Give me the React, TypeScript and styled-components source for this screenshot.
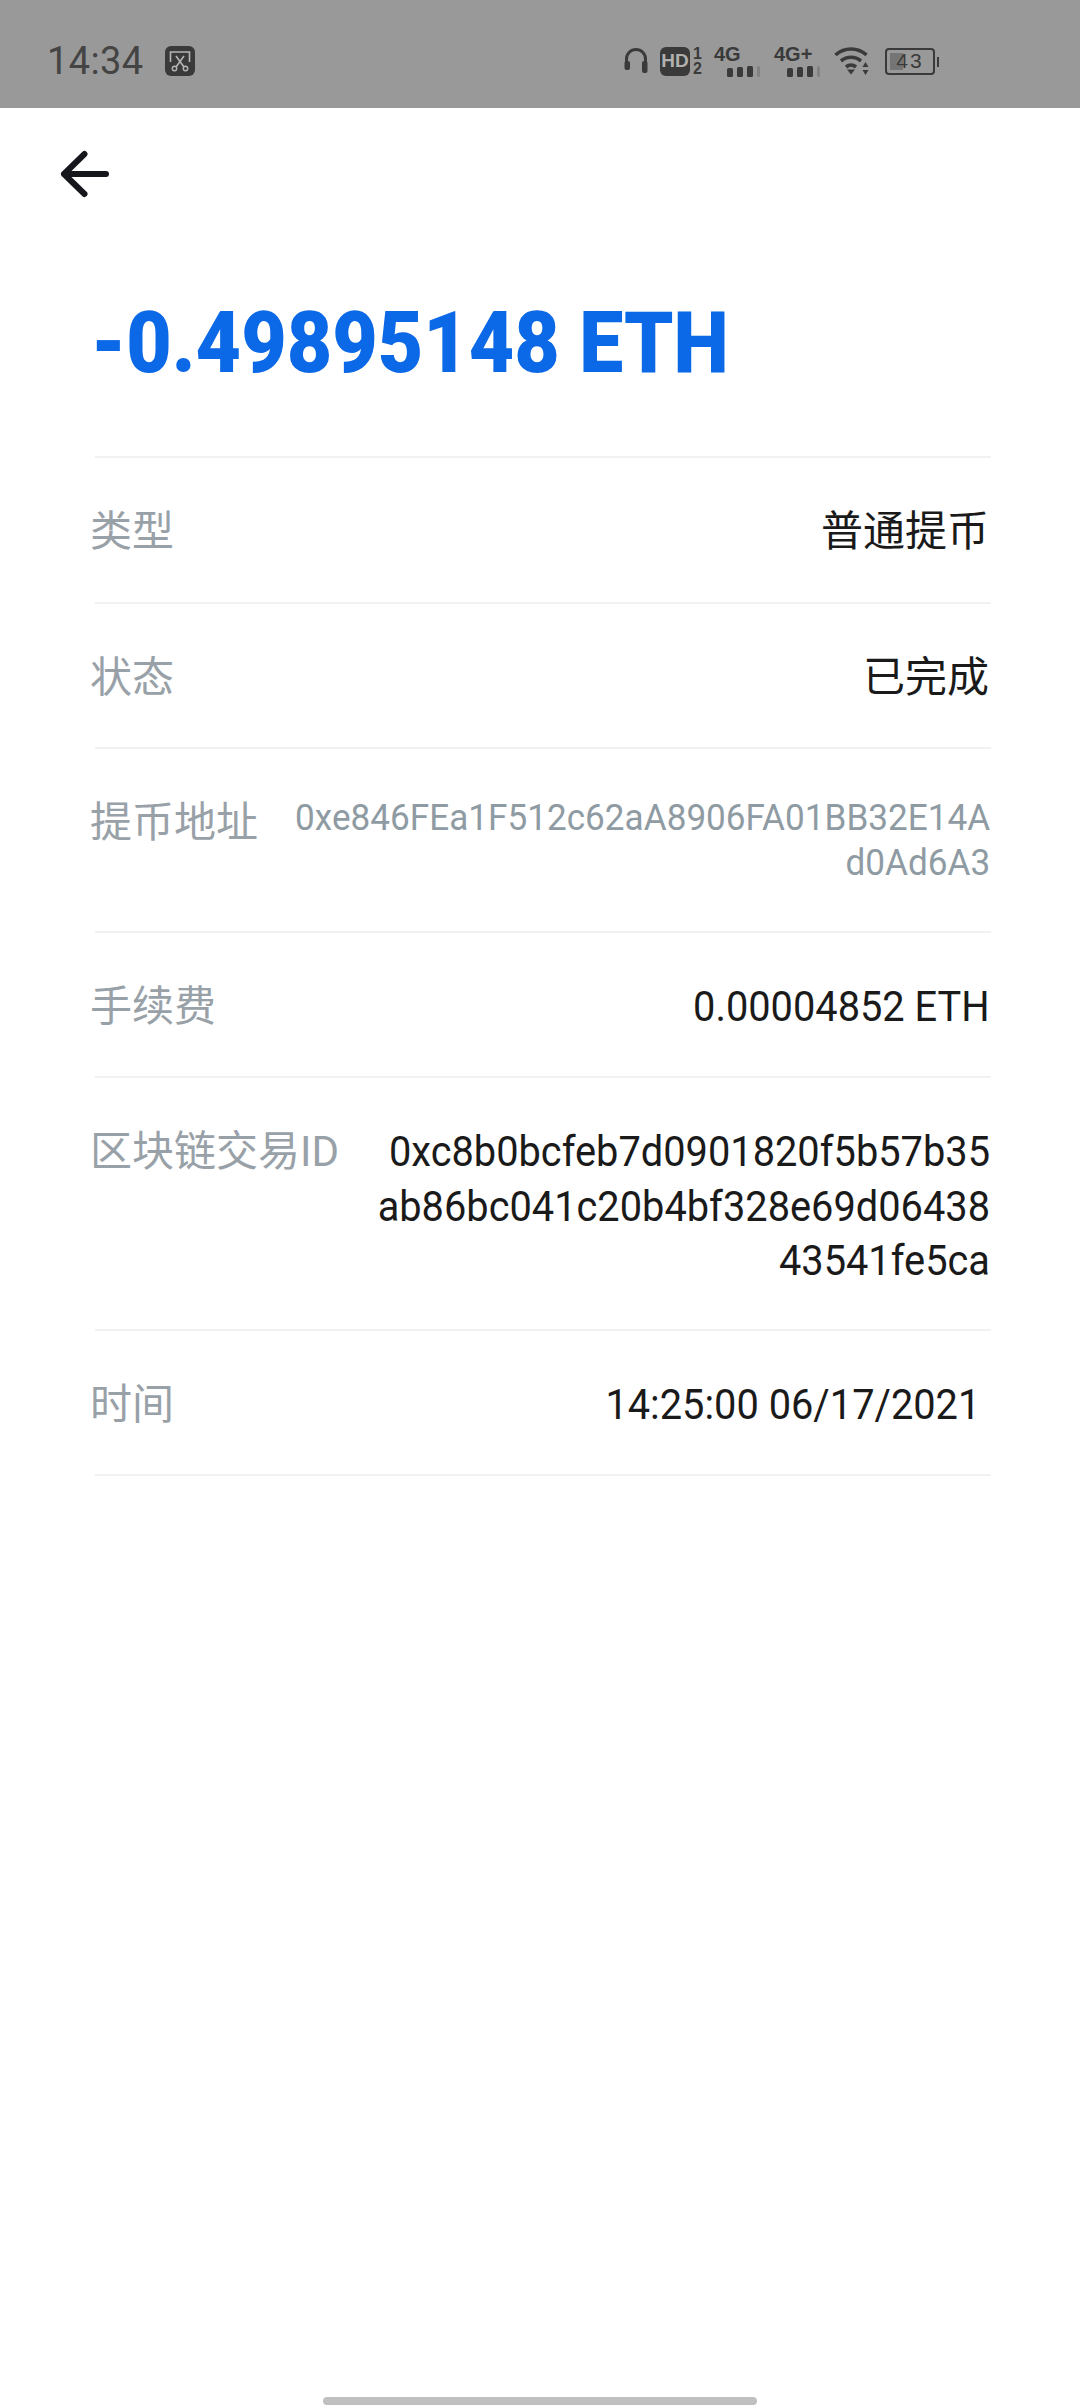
import React from "react";
import styled, { createGlobalStyle } from "styled-components";

const Global = createGlobalStyle`
  html, body { margin: 0; padding: 0; background: #fff; }
  * { box-sizing: border-box; }
`;
const CJK = `"Noto Sans CJK SC", sans-serif`;
const INK = "#3a3a3a";

const Page = styled.div`
  width: 1080px;
  height: 2408px;
  display: flex;
  flex-direction: column;
  background: #fff;
  font-family: Roboto, ${CJK};
  overflow: hidden;
`;
const StatusBar = styled.div`
  height: 108px;
  flex: none;
  background: #999999;
  display: flex;
  align-items: center;
  padding: 14px 145px 0 47px;
`;
const Clock = styled.span`
  font-family: Roboto, sans-serif;
  font-size: 38px;
  line-height: 44px;
  letter-spacing: 0.4px;
  color: #444;
`;
const ShotIcon = styled.svg`
  width: 32px;
  height: 32px;
  margin-left: 20px;
`;
const StatusIcons = styled.div`
  margin-left: auto;
  display: flex;
  align-items: center;
`;
const Headset = styled.svg`
  width: 24px;
  height: 28px;
`;
const HdBadge = styled.span`
  margin-left: 12px;
  width: 30px;
  height: 29px;
  border-radius: 6px;
  background: ${INK};
  color: #b0b0b0;
  font: 700 19px "Liberation Sans", sans-serif;
  display: flex;
  align-items: center;
  justify-content: center;
`;
const SimDigits = styled.span`
  display: flex;
  flex-direction: column;
  width: 9px;
  margin-left: 3px;
  font: 700 16px/15px "Liberation Sans", sans-serif;
  color: ${INK};
`;
const Net = styled.span<{ $ml: number }>`
  width: 46px;
  margin-left: ${(p) => p.$ml}px;
  height: 30px;
  display: flex;
  flex-direction: column;
  align-items: flex-start;
`;
const NetLabel = styled.span`
  height: 16px;
  font: 700 20px/16px "Liberation Sans", sans-serif;
  color: ${INK};
`;
const Bars = styled.svg`
  width: 33px;
  height: 11px;
  margin: 4px 0 0 13px;
  flex: none;
`;
const Wifi = styled.svg`
  width: 36px;
  height: 28px;
  margin-left: 14px;
`;
const Battery = styled.span`
  position: relative;
  margin-left: 15px;
  width: 50px;
  height: 27px;
  border: 2px solid ${INK};
  border-radius: 4px;
  display: flex;
  align-items: center;
  justify-content: center;
  font: 400 21px "Liberation Sans", sans-serif;
  letter-spacing: 2px;
  color: ${INK};
  &::before {
    content: "";
    position: absolute;
    left: 3px;
    top: 3px;
    bottom: 3px;
    width: 13px;
    background: #757575;
  }
  &::after {
    content: "";
    position: absolute;
    right: -6px;
    top: 7px;
    height: 10px;
    width: 2px;
    background: ${INK};
  }
`;
const BatteryText = styled.span`
  position: relative;
`;
const BackRow = styled.div`
  height: 84px;
  flex: none;
  padding: 42px 0 0 58px;
`;
const BackIcon = styled.svg`
  width: 52px;
  height: 48px;
  display: block;
`;
const Amount = styled.h1`
  margin: 0;
  height: 264px;
  padding: 101px 0 0 91px;
  font-family: Roboto, sans-serif;
  font-weight: 900;
  font-size: 85px;
  line-height: 100px;
  color: #0b68e6;
  white-space: nowrap;
  transform: scaleX(0.924);
  transform-origin: 91px 0;
`;
const List = styled.div`
  margin: 0 89px 0 95px;
  border-top: 2px solid #f0f1f2;
  display: flex;
  flex-direction: column;
`;
const Row = styled.div<{ $h: number }>`
  height: ${(p) => p.$h}px;
  border-bottom: 2px solid #f0f1f2;
  display: flex;
  align-items: flex-start;
  padding-top: 45px;
`;
const Label = styled.span`
  margin-left: -5px;
  width: 0;
  flex: none;
  font-family: ${CJK};
  font-size: 42px;
  font-weight: 400;
  line-height: 50px;
  color: #99a1a8;
  white-space: nowrap;
`;
const LabelLatin = styled.span`
  font-family: Roboto, sans-serif;
`;
const Value = styled.span`
  margin-left: auto;
  padding-right: 2px;
  font-family: ${CJK};
  font-size: 42px;
  line-height: 50px;
  color: #1a1a1a;
  text-align: right;
`;
const Num = styled.span<{ $pr?: number }>`
  display: block;
  flex: none;
  margin: 1px ${(p) => p.$pr ?? 1}px 0 auto;
  font-family: Roboto, sans-serif;
  font-size: 43px;
  line-height: 54.5px;
  color: #1a1a1a;
  text-align: right;
  white-space: pre-line;
  transform: scaleX(0.925);
  transform-origin: right top;
`;
const Address = styled.span`
  display: block;
  flex: none;
  margin: 2px 1px 0 auto;
  font-family: Roboto, sans-serif;
  font-size: 36px;
  line-height: 45px;
  color: #8f9ba3;
  text-align: right;
  white-space: pre-line;
  transform: scaleX(0.976);
  transform-origin: right top;
`;
const HomeBar = styled.div`
  margin: auto auto 3px;
  width: 434px;
  height: 8px;
  border-radius: 4px;
  background: #c0c0c0;
`;

const SignalBars = () => (
  <Bars viewBox="0 0 33 11">
    <rect x="0" y="2" width="6" height="9" rx="1.5" fill={INK} />
    <rect x="10" y="1" width="6" height="10" rx="1.5" fill={INK} />
    <rect x="20" y="0" width="6" height="11" rx="1.5" fill={INK} />
    <rect x="30" y="0" width="3" height="11" rx="1.5" fill="#828282" />
  </Bars>
);

export default function App() {
  return (
    <Page>
      <Global />
      <StatusBar>
        <Clock>14:34</Clock>
        <ShotIcon viewBox="0 0 32 32">
          <rect width="30" height="30" x="1" y="1" rx="6" fill={INK} />
          <path d="M6.5 17V7h19v10" fill="none" stroke="#b5b5b5" strokeWidth="1.6" />
          <path d="M12 11l8 11M20 11l-8 11" stroke="#b5b5b5" strokeWidth="1.6" />
          <circle cx="10.5" cy="23.5" r="2.2" fill="none" stroke="#b5b5b5" strokeWidth="1.4" />
          <circle cx="21.5" cy="23.5" r="2.2" fill="none" stroke="#b5b5b5" strokeWidth="1.4" />
        </ShotIcon>
        <StatusIcons>
          <Headset viewBox="0 0 24 28">
            <path d="M2.5 17v-5a9.5 9.5 0 0 1 19 0v5" fill="none" stroke={INK} strokeWidth="3" />
            <rect x="0.5" y="14" width="5.5" height="9" rx="2" fill={INK} />
            <rect x="18" y="14" width="5.5" height="12" rx="2" fill={INK} />
          </Headset>
          <HdBadge>HD</HdBadge>
          <SimDigits>
            <span>1</span>
            <span>2</span>
          </SimDigits>
          <Net $ml={12}>
            <NetLabel>4G</NetLabel>
            <SignalBars />
          </Net>
          <Net $ml={14}>
            <NetLabel>4G+</NetLabel>
            <SignalBars />
          </Net>
          <Wifi viewBox="0 0 36 28">
            <path d="M1.5 8c9-8 22-8 31 0M7 14c6-5 14-5 20 0M12 20c3-2.500 7-2.500 10 0" fill="none" stroke={INK} strokeWidth="3.6" />
            <path d="M13 22.500h8l-4 5z" fill={INK} />
            <path d="M31.500 15l3 5h-6zM31.500 28l-3-5h6z" fill={INK} />
          </Wifi>
          <Battery>
            <BatteryText>43</BatteryText>
          </Battery>
        </StatusIcons>
      </StatusBar>
      <BackRow>
        <BackIcon viewBox="0 0 52 48">
          <path d="M6 24h42M26.500 4 6 24l20.500 20" fill="none" stroke="#15171c" strokeWidth="6" strokeLinecap="round" strokeLinejoin="round" />
        </BackIcon>
      </BackRow>
      <Amount>-0.49895148 ETH</Amount>
      <List>
        <Row $h={146}>
          <Label>类型</Label>
          <Value>普通提币</Value>
        </Row>
        <Row $h={145}>
          <Label>状态</Label>
          <Value>已完成</Value>
        </Row>
        <Row $h={184}>
          <Label>提币地址</Label>
          <Address>{"0xe846FEa1F512c62aA8906FA01BB32E14A\nd0Ad6A3"}</Address>
        </Row>
        <Row $h={145}>
          <Label>手续费</Label>
          <Num>0.00004852 ETH</Num>
        </Row>
        <Row $h={253}>
          <Label>
            区块链交易<LabelLatin>ID</LabelLatin>
          </Label>
          <Num>{"0xc8b0bcfeb7d0901820f5b57b35\nab86bc041c20b4bf328e69d06438\n43541fe5ca"}</Num>
        </Row>
        <Row $h={145}>
          <Label>时间</Label>
          <Num $pr={11}>14:25:00 06/17/2021</Num>
        </Row>
      </List>
      <HomeBar />
    </Page>
  );
}
